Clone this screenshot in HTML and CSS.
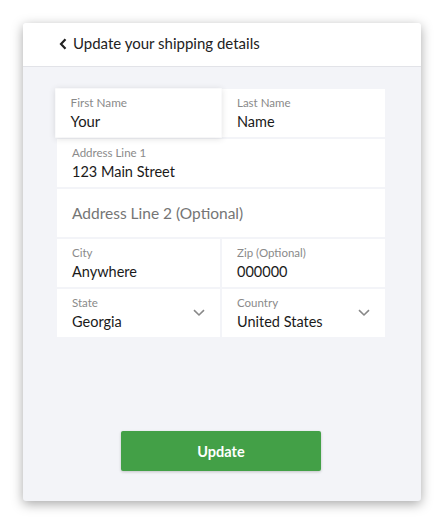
FILE: index.html
```html
<!DOCTYPE html>
<html>
<head>
<meta charset="utf-8">
<link rel="stylesheet" href="styles.css">
</head>
<body>
<div class="card">
  <div class="header">
    <svg class="back" width="8" height="12" viewBox="0 0 8 12"><path d="M6.5 1.2 L2 6 L6.5 10.8" fill="none" stroke="#222" stroke-width="2.2"/></svg>
    <span class="title">Update your shipping details</span>
  </div>
  <div class="body">
    <div class="form">
      <div class="row two">
        <div class="field focused"><div class="label">First Name</div><div class="value">Your</div></div>
        <div class="field"><div class="label">Last Name</div><div class="value">Name</div></div>
      </div>
      <div class="row">
        <div class="field"><div class="label">Address Line 1</div><div class="value">123 Main Street</div></div>
      </div>
      <div class="row">
        <div class="field empty"><div class="placeholder">Address Line 2 (Optional)</div></div>
      </div>
      <div class="row two">
        <div class="field"><div class="label">City</div><div class="value">Anywhere</div></div>
        <div class="field"><div class="label">Zip (Optional)</div><div class="value">000000</div></div>
      </div>
      <div class="row two">
        <div class="field select"><div class="label">State</div><div class="value">Georgia</div>
          <svg class="caret" width="12" height="8" viewBox="0 0 12 8"><path d="M1 1.2 L6 6 L11 1.2" fill="none" stroke="#888" stroke-width="1.6"/></svg></div>
        <div class="field select"><div class="label">Country</div><div class="value">United States</div>
          <svg class="caret" width="12" height="8" viewBox="0 0 12 8"><path d="M1 1.2 L6 6 L11 1.2" fill="none" stroke="#888" stroke-width="1.6"/></svg></div>
      </div>
    </div>
    <button class="btn">Update</button>
  </div>
</div>
</body>
</html>
```
FILE: styles.css
```css
html, body { margin: 0; padding: 0; background: #fff; }
body { padding: 23px 23px 23px 23px; font-family: Lato, "Noto Sans", sans-serif; }
.card {
  width: 398px;
  height: 478px;
  background: #f3f4f8;
  border-radius: 3px;
  box-shadow: 0 3px 12px rgba(0,0,0,0.35);
  overflow: hidden;
  display: flex;
  flex-direction: column;
}
.header {
  height: 44px;
  flex: none;
  box-sizing: border-box;
  padding-bottom: 3px;
  background: #fff;
  border-bottom: 1px solid #e2e3e8;
  display: flex;
  align-items: center;
  padding-left: 36px;
  gap: 6px;
}
.back { display: block; margin-top: 1px; }
.title { font-size: 15px; color: #222; }
.body {
  flex: 1;
  display: flex;
  flex-direction: column;
  align-items: center;
  padding-top: 22px;
  padding-right: 2px;
}
.form {
  width: 328px;
  display: flex;
  flex-direction: column;
  gap: 2px;
}
.row { display: flex; gap: 2px; }
.row > .field { flex: 1; }
.field {
  height: 48px;
  background: #fff;
  padding: 7px 15px 0 15px;
  box-sizing: border-box;
  position: relative;
}
.field.focused {
  z-index: 1;
  box-shadow: 0 1px 6px rgba(0,0,0,0.12);
  transform: scale(1.022, 1.03);
}
.label { font-size: 11.5px; color: #8a8a8a; line-height: 14px; }
.value { font-size: 14.5px; color: #1a1a1a; line-height: 19px; margin-top: 2px; }
.empty { display: flex; align-items: center; padding-top: 0; }
.placeholder { font-size: 15.5px; color: #757575; }
.caret { position: absolute; right: 15px; top: 20px; }
.btn {
  margin-top: 94px;
  width: 200px;
  height: 40px;
  border: none;
  border-radius: 2px;
  background: #43a047;
  color: #fff;
  font-family: inherit;
  font-weight: 700;
  font-size: 14.5px;
  box-shadow: 0 1px 3px rgba(0,0,0,0.2);
}
```
